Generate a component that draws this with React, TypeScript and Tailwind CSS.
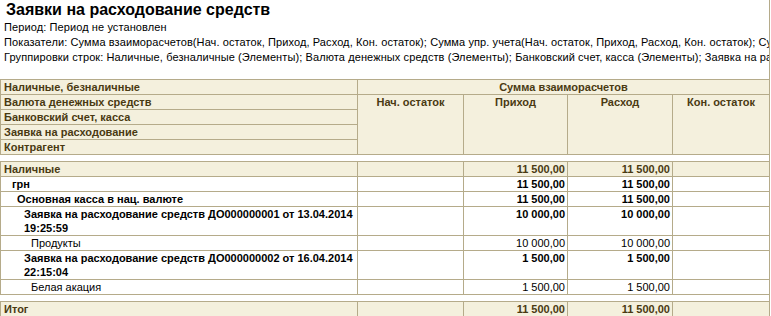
import React from 'react';

const cols = 'grid-cols-[356px_105px_103px_104px_96px]';

type Row = {
  label: React.ReactNode;
  indent: string;
  bold: boolean;
  group?: boolean;
  tall?: boolean;
  prihod: string;
  rashod: string;
};

const rows: Row[] = [
  { label: 'Наличные', indent: 'pl-[3px]', bold: true, group: true, prihod: '11 500,00', rashod: '11 500,00' },
  { label: 'грн', indent: 'pl-[11px]', bold: true, prihod: '11 500,00', rashod: '11 500,00' },
  { label: 'Основная касса в нац. валюте', indent: 'pl-[16px]', bold: true, prihod: '11 500,00', rashod: '11 500,00' },
  {
    label: (
      <>
        Заявка на расходование средств ДО000000001 от 13.04.2014
        <br />
        19:25:59
      </>
    ),
    indent: 'pl-[23px]',
    bold: true,
    tall: true,
    prihod: '10 000,00',
    rashod: '10 000,00',
  },
  { label: 'Продукты', indent: 'pl-[30px]', bold: false, prihod: '10 000,00', rashod: '10 000,00' },
  {
    label: (
      <>
        Заявка на расходование средств ДО000000002 от 16.04.2014
        <br />
        22:15:04
      </>
    ),
    indent: 'pl-[23px]',
    bold: true,
    tall: true,
    prihod: '1 500,00',
    rashod: '1 500,00',
  },
  { label: 'Белая акация', indent: 'pl-[30px]', bold: false, prihod: '1 500,00', rashod: '1 500,00' },
];

const headLabels = [
  'Наличные, безналичные',
  'Валюта денежных средств',
  'Банковский счет, касса',
  'Заявка на расходование',
  'Контрагент',
];

function BodyRow({ row }: { row: Row }) {
  const bg = row.group ? 'bg-[#f4f0dd] text-[#4a3a12]' : 'bg-white text-black';
  const h = row.tall ? 'h-[28px]' : 'h-[14px]';
  const weight = row.bold ? 'font-bold' : 'font-normal';
  return (
    <>
      <div className={`${bg} ${h} ${weight} ${row.indent} whitespace-nowrap overflow-hidden`}>{row.label}</div>
      <div className={`${bg} ${h}`}></div>
      <div className={`${bg} ${h} ${weight} text-right pr-[2px]`}>{row.prihod}</div>
      <div className={`${bg} ${h} ${weight} text-right pr-[2px]`}>{row.rashod}</div>
      <div className={`${bg} ${h}`}></div>
    </>
  );
}

export default function App() {
  return (
    <div className="w-[771px] h-[316px] overflow-hidden bg-white font-['Liberation_Sans',Arial,sans-serif] text-[11px] leading-[14px] text-black">
      <div className="w-[770px] border-r border-[#b5ab8a] overflow-hidden">
        <div className="h-[20px] pl-[6px] text-[16px] leading-[20px] font-bold whitespace-nowrap">
          Заявки на расходование средств
        </div>
        <div className="pl-[4px] leading-[15px] whitespace-nowrap tracking-[0.1px]">
          <div>Период: Период не установлен</div>
          <div>
            Показатели: Сумма взаиморасчетов(Нач. остаток, Приход, Расход, Кон. остаток); Сумма упр. учета(Нач. остаток, Приход, Расход, Кон. остаток); Сумма рег. учета(Нач. остаток, Приход, Расход, Кон. остаток)
          </div>
          <div>
            Группировки строк: Наличные, безналичные (Элементы); Валюта денежных средств (Элементы); Банковский счет, касса (Элементы); Заявка на расходование (Элементы); Контрагент (Элементы)
          </div>
        </div>

        <div className="mt-[14px] flex flex-col gap-[6px]">
          <div className={`grid ${cols} grid-rows-[repeat(5,14px)] gap-px bg-[#b5ab8a] border border-[#b5ab8a] w-[770px] font-bold text-[#4a3a12]`}>
            {headLabels.map((l, i) => (
              <div
                key={l}
                className={`col-start-1 bg-[#f4f0dd] pl-[3px] whitespace-nowrap ${
                  ['row-start-1', 'row-start-2', 'row-start-3', 'row-start-4', 'row-start-5'][i]
                }`}
              >
                {l}
              </div>
            ))}
            <div className="col-start-2 col-span-4 row-start-1 bg-[#f4f0dd] text-center">Сумма взаиморасчетов</div>
            <div className="col-start-2 row-start-2 row-span-4 bg-[#f4f0dd] text-center">Нач. остаток</div>
            <div className="col-start-3 row-start-2 row-span-4 bg-[#f4f0dd] text-center">Приход</div>
            <div className="col-start-4 row-start-2 row-span-4 bg-[#f4f0dd] text-center">Расход</div>
            <div className="col-start-5 row-start-2 row-span-4 bg-[#f4f0dd] text-center">Кон. остаток</div>
          </div>

          <div className={`grid ${cols} gap-px bg-[#b5ab8a] border border-[#b5ab8a] w-[770px]`}>
            {rows.map((r, i) => (
              <BodyRow key={i} row={r} />
            ))}
          </div>

          <div className={`grid ${cols} gap-px bg-[#b5ab8a] border border-[#b5ab8a] w-[770px] font-bold text-[#4a3a12]`}>
            <div className="bg-[#f4f0dd] h-[14px] pl-[3px]">Итог</div>
            <div className="bg-[#f4f0dd] h-[14px]"></div>
            <div className="bg-[#f4f0dd] h-[14px] text-right pr-[2px]">11 500,00</div>
            <div className="bg-[#f4f0dd] h-[14px] text-right pr-[2px]">11 500,00</div>
            <div className="bg-[#f4f0dd] h-[14px]"></div>
          </div>
        </div>
      </div>
    </div>
  );
}
